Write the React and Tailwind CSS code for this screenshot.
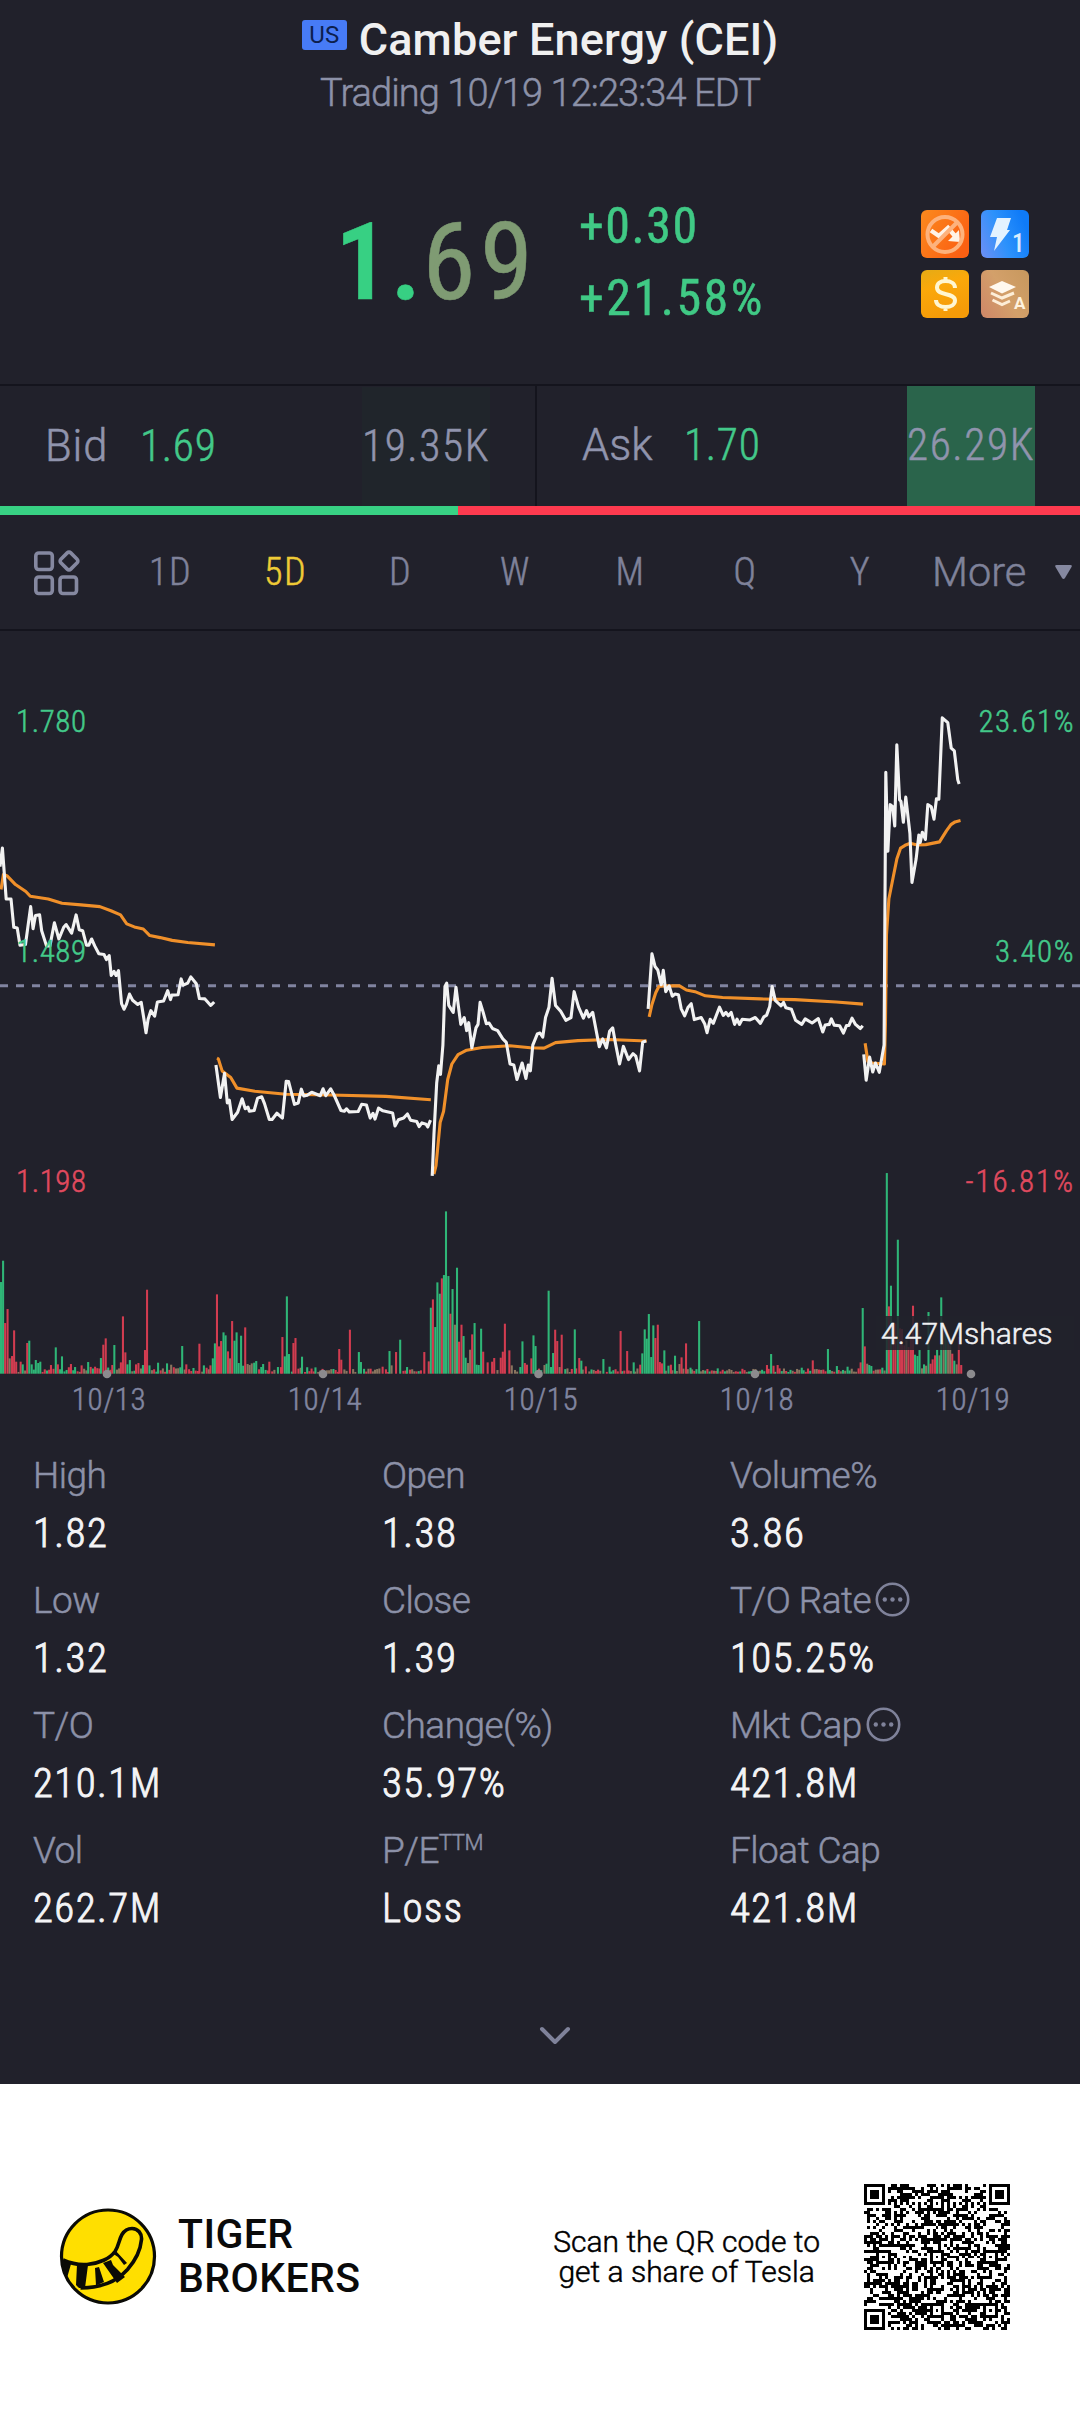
import React from "react";

const PERIODS = ["1D", "5D", "D", "W", "M", "Q", "Y"];

const STATS = [
  { label: "High", value: "1.82" },
  { label: "Open", value: "1.38" },
  { label: "Volume%", value: "3.86" },
  { label: "Low", value: "1.32" },
  { label: "Close", value: "1.39" },
  { label: "T/O Rate", value: "105.25%", info: true },
  { label: "T/O", value: "210.1M" },
  { label: "Change(%)", value: "35.97%" },
  { label: "Mkt Cap", value: "421.8M", info: true },
  { label: "Vol", value: "262.7M" },
  { label: "P/E", sup: "TTM", value: "Loss" },
  { label: "Float Cap", value: "421.8M" },
];

// Plot units: 3136 across the full chart width, y grows downwards
const PRICE_LINES = [
  "0,542 7,488 18,636 32,636 40,718 50,720 58,770 74,768 89,658 96,722 103,684 115,682 121,728 135,772 145,772 158,705 171,752 185,718 192,710 208,735 221,682 230,725 240,728 251,770 258,770 266,752 275,772 287,795 302,797 309,812 317,800 323,858 331,846 337,858 344,844 353,940 360,956 367,942 376,912 385,930 400,942 410,936 418,985 424,1024 430,985 438,960 449,976 457,935 475,932 487,902 495,928 499,915 517,914 526,868 532,886 545,880 554,862 570,882 579,925 595,926 612,945 622,935",
  "627,1118 640,1212 652,1142 660,1228 666,1220 674,1276 690,1255 703,1216 712,1245 720,1240 724,1252 738,1250 748,1214 760,1210 768,1230 782,1276 790,1276 804,1258 820,1272 831,1165 838,1166 855,1232 866,1228 875,1188 882,1208 892,1206 905,1197 930,1207 938,1187 946,1207 960,1187 970,1205 990,1250 1000,1252 1006,1245 1014,1254 1040,1253 1050,1232 1064,1234 1075,1272 1083,1258 1089,1275 1099,1243 1112,1251 1140,1257 1147,1295 1157,1277 1172,1272 1183,1260 1192,1278 1210,1282 1217,1297 1225,1286 1237,1290 1242,1298 1250,1278",
  "1255,1440 1260,1320 1268,1170 1274,1120 1279,1145 1286,1060 1292,890 1297,880 1303,945 1316,965 1324,892 1330,940 1338,1000 1348,980 1355,1018 1361,995 1370,1068 1382,1010 1388,1000 1394,936 1403,965 1412,998 1420,996 1430,1012 1445,1018 1460,1042 1470,1052 1481,1115 1492,1118 1501,1160 1516,1112 1527,1157 1534,1118 1540,1135 1547,1060 1560,1028 1568,1025 1576,1037 1584,980 1594,950 1603,866 1613,945 1628,962 1643,988 1658,980 1667,905 1680,950 1694,982 1703,960 1710,978 1721,965 1740,1065 1750,1042 1761,1068 1770,1020 1779,1010 1788,1060 1799,1115 1810,1064 1825,1102 1838,1085 1846,1092 1857,1135 1866,1052 1876,1048",
  "1882,955 1893,795 1902,832 1910,842 1920,885 1926,843 1933,905 1943,888 1952,918 1960,912 1970,914 1978,955 1988,975 1998,950 2007,940 2016,986 2036,980 2046,998 2053,1024 2062,985 2071,997 2089,950 2100,974 2108,965 2115,975 2123,965 2133,1000 2140,985 2147,1000 2155,985 2178,987 2193,980 2208,997 2218,978 2226,973 2235,948 2242,890 2251,930 2268,946 2275,936 2282,952 2298,956 2310,988 2328,1000 2338,984 2358,996 2376,983 2389,1022 2396,1002 2408,1000 2414,984 2422,1002 2438,1004 2449,1025 2458,1003 2465,1003 2474,982 2484,1000 2498,1012 2505,1004",
  "2508,1087 2515,1162 2525,1095 2534,1138 2542,1112 2553,1139 2567,1060 2572,268 2578,497 2585,362 2592,368 2598,424 2604,188 2612,348 2616,352 2623,413 2630,340 2642,445 2648,588 2660,520 2668,450 2672,472 2678,442 2687,463 2694,362 2704,368 2712,404 2719,345 2726,346 2736,110 2752,124 2762,198 2771,206 2781,290 2785,302",
];

const AVG_LINES = [
  "3,608 10,565 20,568 45,594 75,614 88,628 140,636 180,648 235,653 290,658 322,670 350,682 368,708 390,717 416,723 435,742 465,748 500,756 545,762 624,769",
  "630,1098 634,1100 645,1135 670,1154 688,1185 740,1194 830,1203 960,1205 1120,1209 1251,1219",
  "1260,1435 1266,1410 1278,1285 1288,1252 1300,1160 1312,1115 1330,1088 1355,1075 1400,1067 1480,1062 1540,1068 1580,1069 1613,1053 1678,1047 1768,1044 1878,1048",
  "1885,978 1893,942 1904,908 1913,890 1933,888 1973,888 1993,900 2018,905 2048,917 2098,922 2208,926 2308,928 2428,935 2506,941",
  "2512,1055 2520,1108 2533,1112 2568,1115 2571,1000 2574,740 2581,635 2593,575 2604,520 2615,488 2628,480 2643,474 2663,479 2688,478 2728,470 2748,438 2761,420 2773,412 2789,408",
];

// x, height and direction (g up, r down, m mixed) of the larger bars
const VOLUME =
  "3,275g 9,339g 15,152r 22,194r 28,46m 35,53r 41,130r 47,36r 60,36r 66,28g 79,92r 85,99g 92,28g 104,41g 111,32g 117,36g 148,26r 162,79g 168,28r 180,52g 206,29r 218,20g 237,25r 256,35g 293,47g 300,87r 307,106r 326,26r 332,86g 351,34r 357,172r 364,64r 370,28g 377,41g 395,28r 402,32r 415,26g 421,71r 427,252r 434,25g 459,33g 485,31g 497,27m 529,83g 541,28r 579,90r 592,25g 611,25r 618,46g 624,91g 630,238r 636,82r 642,98r 649,124g 655,115g 662,67r 668,46m 674,158r 681,99g 687,124g 693,32g 700,114g 706,24g 712,139r 719,29m 725,26m 731,31m 738,33g 744,38g 764,29g 782,36r 807,20g 820,110r 827,52g 833,232g 839,59g 852,92r 858,107r 877,51g 916,19g 985,74r 991,42r 1016,132r 1042,65g 1048,35g 1111,21r 1131,68g 1137,25m 1150,65r 1162,102g 1182,20g 1232,65r 1245,37r 1251,198g 1257,223r 1264,140g 1270,274g 1277,240g 1283,286r 1289,296g 1295,487g 1302,293g 1308,180r 1314,254g 1321,147m 1327,318g 1333,96r 1340,147r 1346,113g 1352,48g 1359,32m 1365,72m 1371,118r 1378,152g 1384,27g 1390,26g 1397,135g 1403,66r 1416,34r 1429,36r 1435,47r 1454,48r 1460,66r 1466,150r 1479,70r 1486,25m 1511,20g 1517,97g 1524,32r 1530,27r 1543,46r 1549,115g 1555,83g 1581,26m 1587,30g 1593,249g 1600,20g 1606,62g 1612,132r 1618,98r 1625,20m 1631,117r 1669,133g 1682,47r 1688,39g 1701,22r 1752,44g 1770,21g 1802,128r 1821,68r 1840,34g 1859,27r 1865,61g 1872,133g 1878,105g 1884,179g 1891,50g 1897,145g 1903,107r 1910,147r 1916,35r 1922,31r 1929,70g 1941,24g 1948,27r 1960,54g 1973,29m 1979,49r 1992,91r 2005,18g 2030,158g 2084,16g 2227,26r 2239,59g 2246,24r 2258,26r 2328,18g 2360,40r 2404,74g 2430,23g 2461,21g 2493,16r 2499,34r 2505,197g 2511,82r 2518,30m 2524,26g 2530,23g 2562,18g 2575,602g 2581,202r 2587,264g 2594,120r 2600,150r 2607,402g 2613,136r 2619,134r 2626,85r 2632,100m 2638,80r 2645,110r 2651,204r 2657,57g 2664,53g 2670,71g 2677,16m 2683,28g 2689,24m 2696,185g 2702,30r 2708,43r 2715,55r 2721,72g 2728,55m 2733,229g 2740,130m 2746,120g 2753,100m 2759,85m 2765,60r 2771,39g 2778,28m 2784,110r 2791,26r";

const BAR_COLORS = { g: "#2fb677", r: "#d23c50", m: "#8a755f" };

const buildBars = () => {
  const bars = VOLUME.split(" ").map((item) => {
    const [x, rest] = item.split(",");
    return { x: Number(x), h: parseInt(rest, 10), c: rest.slice(-1) };
  });
  // Quiet minutes between the spikes
  let seed = 11;
  const rand = () => {
    seed = (seed * 1103515245 + 12345) % 2147483648;
    return seed / 2147483648;
  };
  const quiet = [];
  for (let x = 3; x < 2795; x += 6.35) {
    const h = 5 + rand() * (x < 900 ? 16 : 11);
    const c = "grmrm"[Math.floor(rand() * 5)];
    if (!bars.some((b) => Math.abs(b.x - x) < 4)) quiet.push({ x, h, c });
  }
  return [...quiet, ...bars];
};

const BARS = buildBars();

const QR_SIZE = 49;

const buildQr = () => {
  let seed = 77;
  const cells = Array.from({ length: QR_SIZE }, () =>
    Array.from({ length: QR_SIZE }, () => {
      seed = (seed * 1103515245 + 12345) % 2147483648;
      return seed / 2147483648 > 0.5;
    })
  );
  const ring = (cx, cy, r, clear) => {
    for (let y = -clear; y <= clear; y++) {
      for (let x = -clear; x <= clear; x++) {
        const d = Math.max(Math.abs(x), Math.abs(y));
        if (cells[cy + y]?.[cx + x] === undefined) continue;
        cells[cy + y][cx + x] = d === r || d <= r - 2;
      }
    }
  };
  for (let i = 8; i < QR_SIZE - 8; i++) {
    cells[6][i] = i % 2 === 0;
    cells[i][6] = i % 2 === 0;
  }
  [[24, 6], [6, 24], [24, 24], [42, 24], [24, 42], [42, 42]].forEach(([x, y]) => ring(x, y, 2, 2));
  [[3, 3], [45, 3], [3, 45]].forEach(([x, y]) => ring(x, y, 3, 4));
  return cells;
};

const QR_PATH = buildQr()
  .map((row, y) => row.map((on, x) => (on ? `M${x} ${y}h1v1h-1z` : "")).join(""))
  .join("");

function FeatureIcons() {
  return (
    <div className="mt-[3px] grid grid-cols-2 gap-3">
      <svg className="size-12" viewBox="0 0 48 48">
        <defs>
          <linearGradient id="noShort" x1="0" y1="0" x2="1" y2="0.6">
            <stop offset="0" stopColor="#fb8a1e" />
            <stop offset="1" stopColor="#fb6012" />
          </linearGradient>
        </defs>
        <rect width="48" height="48" rx="6" fill="url(#noShort)" />
        <path d="M10 20.500l8 5.500 9-8 7 8" fill="none" stroke="#fff3e6" strokeWidth="4.500" />
        <path d="M27 31l12 1-1-12z" fill="#fff3e6" />
        <circle cx="24" cy="24.500" r="17.500" fill="none" stroke="#fdb27c" strokeWidth="4" />
        <path d="M12 36.500l24-24" stroke="#fdb27c" strokeWidth="4" />
      </svg>
      <svg className="size-12" viewBox="0 0 48 48">
        <defs>
          <linearGradient id="level1" x1="0" y1="0.9" x2="1" y2="0.5">
            <stop offset="0" stopColor="#6a8ff5" />
            <stop offset="0.5" stopColor="#2d92fb" />
            <stop offset="1" stopColor="#0f7bf8" />
          </linearGradient>
        </defs>
        <rect width="48" height="48" rx="6" fill="url(#level1)" />
        <path d="M16 8h14l-4 12h3L13 41l3-14H9z" fill="#e3f2ff" />
        <text x="31" y="42" fontSize="25" fontWeight="500" fontFamily="Roboto Condensed, sans-serif" fill="#d9ecff">
          1
        </text>
      </svg>
      <svg className="size-12" viewBox="0 0 48 48">
        <defs>
          <linearGradient id="cash" x1="0" y1="0" x2="0.3" y2="1">
            <stop offset="0" stopColor="#e5ab16" />
            <stop offset="0.4" stopColor="#fba80a" />
            <stop offset="1" stopColor="#f59b08" />
          </linearGradient>
        </defs>
        <rect width="48" height="48" rx="6" fill="url(#cash)" />
        <path
          d="M34 18c0-4.500-4-7-9.500-7S16 13.500 16 17.500c0 9 18 4.500 18 13 0 4-4 6.500-9.500 6.500S15 34.500 15 30M24.500 7v4M24.500 37v4"
          fill="none"
          stroke="#fff6d0"
          strokeWidth="4"
        />
      </svg>
      <svg className="size-12" viewBox="0 0 48 48">
        <defs>
          <linearGradient id="depth" x1="0" y1="0.8" x2="1" y2="0.2">
            <stop offset="0" stopColor="#cf8a68" />
            <stop offset="0.5" stopColor="#d3a06a" />
            <stop offset="1" stopColor="#c9995f" />
          </linearGradient>
        </defs>
        <rect width="48" height="48" rx="6" fill="url(#depth)" />
        <path d="M8 17l13-6 14 6-14 6.500z" fill="#fff8ee" />
        <path d="M10 23l11 5 12-5M11.500 30l9.500 4.500 8-3.500" fill="none" stroke="#fdeed8" strokeWidth="3" />
        <text x="33" y="39" fontSize="17" fontWeight="700" fontFamily="Roboto, sans-serif" fill="#fff3df">
          A
        </text>
      </svg>
    </div>
  );
}

function InfoDots() {
  return (
    <svg className="mb-[3px] ml-1 size-[35px]" viewBox="0 0 35 35" fill="#7f829a">
      <circle cx="17.500" cy="17.500" r="15.700" fill="none" stroke="#7f829a" strokeWidth="2.600" />
      <circle cx="9.800" cy="17.500" r="2.200" />
      <circle cx="17.500" cy="17.500" r="2.200" />
      <circle cx="25.200" cy="17.500" r="2.200" />
    </svg>
  );
}

function TigerLogo() {
  return (
    <svg className="size-[98px]" viewBox="0 0 98 98">
      <circle cx="49" cy="48.500" r="46.500" fill="#ffdf00" stroke="#0b0b06" strokeWidth="3.200" />
      {/* Tail */}
      <path
        d="M4 52c9 4 17 5 24 4.500 12-1 23-6 28-13 4-6 4-12 7-17 3-5 7-6 10-6 6 0 10 5 9.500 11-1 11-7 22-14 30-12 13-26 18-47 18.500"
        fill="none"
        stroke="#0b0b06"
        strokeWidth="3.600"
      />
      <path
        d="M3 52l9 4-4 14-5-8zM18 56.500l11 .5-3 23h-6l-3-3zM36 60l4-1 5 15-8 3.500zM44 55l8-3 2 5 12 12-8 6zM56 42l12 13-3 2-6-8-6-4z"
        fill="#0b0b06"
      />
    </svg>
  );
}

function Chart() {
  return (
    <svg
      className="block h-[809px] w-full"
      viewBox="0 631 1080 809"
      fontFamily="Roboto Condensed, sans-serif"
      fontSize="31"
      fontWeight="300"
      strokeWidth="0.500"
    >
      <path d="M0 985.800H1080" stroke="#8184a0" strokeWidth="3" strokeDasharray="8 8" />

      <g transform="translate(0 1373.700) scale(0.3444 0.3333)">
        {BARS.map((b, i) => (
          <rect key={i} x={b.x - 3} y={-b.h} width="6" height={b.h} fill={BAR_COLORS[b.c]} />
        ))}
      </g>
      {[107, 323, 538.5, 755, 971].map((x) => (
        <circle key={x} cx={x} cy="1374" r="4.300" fill="#8c8b8e" />
      ))}

      <g transform="translate(0 680) scale(0.3444)" fill="none" strokeWidth="9" strokeLinejoin="round">
        {AVG_LINES.map((points) => (
          <polyline key={points} points={points} stroke="#f0902a" />
        ))}
        {PRICE_LINES.map((points) => (
          <polyline key={points} points={points} stroke="#f2f2f2" />
        ))}
      </g>

      <g fill="#43c98a" stroke="#43c98a">
        <text x="16" y="732" letterSpacing="0.600">1.780</text>
        <text x="16" y="962" letterSpacing="0.600">1.489</text>
        <text x="1075" y="732" textAnchor="end" letterSpacing="1.500">23.61%</text>
        <text x="1075" y="962" textAnchor="end" letterSpacing="1.500">3.40%</text>
      </g>
      <g fill="#e04a5f" stroke="#e04a5f">
        <text x="16" y="1192" letterSpacing="0.600">1.198</text>
        <text x="1075" y="1192" textAnchor="end" letterSpacing="2">-16.81%</text>
      </g>

      <rect x="876" y="1316" width="198" height="34" fill="#21222b" fillOpacity="0.85" />
      <text x="881" y="1344" fill="#f0f0f2" stroke="#f0f0f2" fontSize="30" fontFamily="Roboto, sans-serif">
        4.47Mshares
      </text>

      <g fill="#8186a0" stroke="#8186a0" textAnchor="middle" letterSpacing="0.600">
        <text x="109" y="1410">10/13</text>
        <text x="325" y="1410">10/14</text>
        <text x="541" y="1410">10/15</text>
        <text x="757" y="1410">10/18</text>
        <text x="973" y="1410">10/19</text>
      </g>
    </svg>
  );
}

export default function App() {
  return (
    <div className="h-[2429px] w-[1080px] overflow-hidden bg-white font-['Roboto_Condensed',sans-serif] font-light [-webkit-text-stroke:0.5px]">
      <div className="h-[2084px] bg-[#21212b]">
        {/* Header */}
        <div className="flex h-[70px] items-center justify-center pt-2 font-['Roboto',sans-serif] [-webkit-text-stroke:0]">
          <span className="mr-3 mb-2 flex h-[30px] w-[45px] items-center justify-center rounded-[3px] bg-[#477bf6] text-2xl font-normal text-[#0d1f4d]">
            US
          </span>
          <h1 className="text-[45px] leading-none font-medium tracking-[0.003em] text-[#f0f0f0]">
            Camber Energy (CEI)
          </h1>
        </div>
        <p className="text-center font-['Roboto',sans-serif] text-[38px] leading-[46px] tracking-[-0.024em] text-[#8c91a8]">
          Trading 10/19 12:23:34 EDT
        </p>

        {/* Price */}
        <div className="flex h-[268px] items-center pt-6 pl-[335px]">
          <div className="w-[244px] text-[108px] leading-none tracking-[0.04em]">
            <span className="font-semibold tracking-[0.01em] text-[#37d083]">1.</span>
            <span className="font-normal text-[#7f9b73]">69</span>
          </div>
          <div className="w-[342px] text-[50px] leading-[72px] font-normal text-[#40c985]">
            <div className="tracking-[0.03em]">+0.30</div>
            <div className="tracking-[0.05em]">+21.58%</div>
          </div>
          <FeatureIcons />
        </div>

        {/* Bid / Ask */}
        <div className="flex h-[122px] border-t-2 border-[#14141d] text-[43.500px] text-[#9094ad]">
          <div className="flex w-[537px] items-center border-r-2 border-[#14141d] pt-px pr-[45px] pl-[45px]">
            <span className="w-[95px] font-['Roboto',sans-serif] tracking-[0.02em]">Bid</span>
            <span className="tracking-[0.015em] text-[#43c98a]">1.69</span>
            <span className="ml-auto flex h-full w-[128px] items-center justify-center bg-[#20252b] tracking-[0.035em]">
              19.35K
            </span>
          </div>
          <div className="flex flex-1 items-center pr-[45px] pl-[45px]">
            <span className="w-[102px] font-['Roboto',sans-serif]">Ask</span>
            <span className="tracking-[0.015em] text-[#43c98a]">1.70</span>
            <span className="ml-auto flex h-full w-[128px] items-center justify-center bg-[#2a644b] tracking-[0.035em]">
              26.29K
            </span>
          </div>
        </div>
        <div className="flex h-[9px]">
          <div className="w-[458px] bg-[#38d184]" />
          <div className="flex-1 bg-[#fd3a4f]" />
        </div>

        {/* Period tabs */}
        <div className="flex h-[116px] items-center border-b-2 border-[#14141d] text-[38px] text-[#7f829a]">
          <svg className="ml-[33px] h-[49px] w-[48px]" viewBox="0 0 48 49" fill="none" stroke="#8588a0" strokeWidth="3.600">
            <rect x="2.800" y="5" width="16.500" height="16.500" rx="3" />
            <rect x="2.800" y="29" width="16.500" height="16.500" rx="3" />
            <rect x="27" y="29" width="16.500" height="16.500" rx="3" />
            <rect x="29" y="6" width="14" height="14" rx="2.500" transform="rotate(45 36 13)" />
          </svg>
          <div className="ml-[32px] flex">
            {PERIODS.map((p) => (
              <span key={p} className={`w-[115px] text-center tracking-[0.04em] ${p === "5D" ? "text-[#efcb36]" : ""}`}>
                {p}
              </span>
            ))}
          </div>
          <span className="ml-[14px] font-['Roboto',sans-serif] text-[41.500px]">More</span>
          <svg className="mr-[7px] ml-auto h-[16px] w-[19px]" viewBox="0 0 19 16" fill="#8588a0">
            <path d="M2.500 1h14q2 0 1 2L11 14q-1.500 2-3 0L1.500 3q-1-2 1-2z" />
          </svg>
        </div>

        <Chart />

        {/* Key stats */}
        <div className="grid grid-cols-[349px_348px_1fr] pl-[33px]">
          {STATS.map((s) => (
            <div key={s.label} className="h-[125px] pt-[12px]">
              <div className="flex h-[47px] items-center font-['Roboto',sans-serif] text-[37px] leading-none tracking-[-0.014em] text-[#8c91a8]">
                {s.label}
                {s.sup && <span className="mb-4 text-[22px]">{s.sup}</span>}
                {s.info && <InfoDots />}
              </div>
              <div className="flex h-[68px] items-center text-[41px] leading-none tracking-[0.035em] text-[#f4f4f6] [-webkit-text-stroke:0.9px]">
                {s.value}
              </div>
            </div>
          ))}
        </div>
        <div className="mt-[85px] flex justify-center pl-[30px]">
          <svg className="h-[22px] w-[32px]" viewBox="0 0 32 22" fill="none" stroke="#7f829a" strokeWidth="4">
            <path d="M3 4l13 13L29 4" strokeLinecap="round" strokeLinejoin="round" />
          </svg>
        </div>
      </div>

      {/* Footer */}
      <div className="flex h-[345px] items-center pl-[59px] font-['Roboto',sans-serif]">
        <TigerLogo />
        <div className="ml-[21px] text-[41px] leading-[43.500px] font-medium tracking-[0.01em] text-[#0a0a0a] [-webkit-text-stroke:0]">
          <div>TIGER</div>
          <div>BROKERS</div>
        </div>
        <p className="ml-auto text-center text-[30px] leading-[30px] text-black">
          Scan the QR code to
          <br />
          get a share of Tesla
        </p>
        <svg className="mr-[70px] ml-[44px] size-[146px]" viewBox="0 0 49 49" shapeRendering="crispEdges">
          <path d={QR_PATH} fill="#000" />
        </svg>
      </div>
    </div>
  );
}
